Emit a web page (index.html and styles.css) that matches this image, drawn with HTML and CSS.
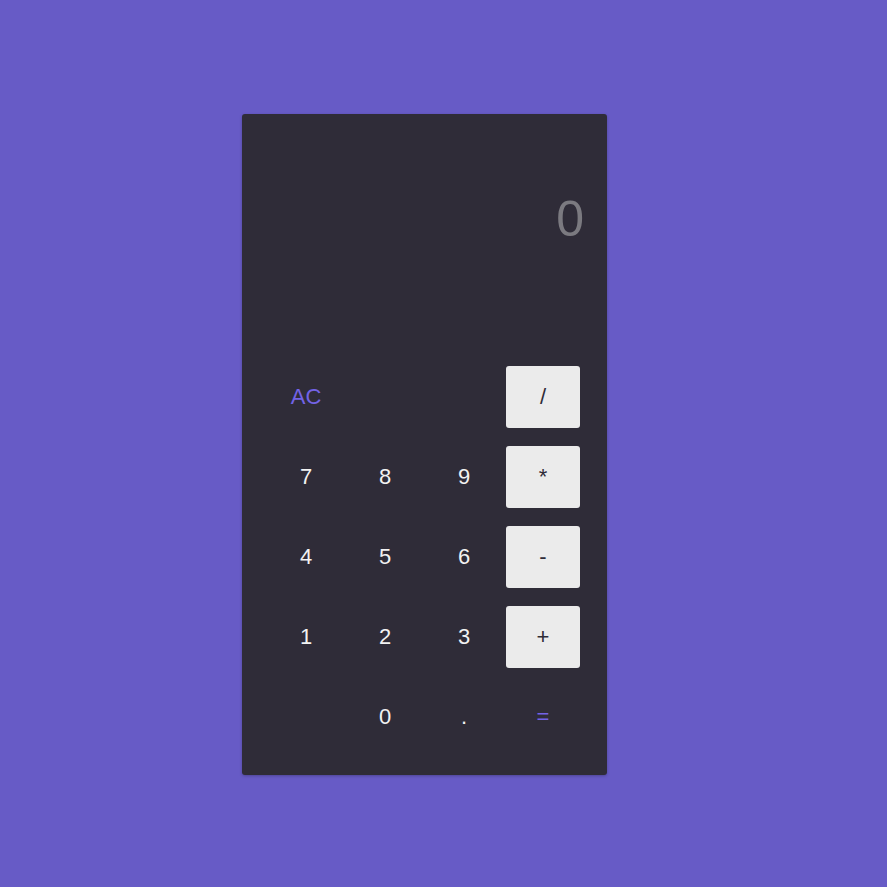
FILE: index.html
```html
<!DOCTYPE html>
<html>
<head>
<meta charset="utf-8">
<link rel="stylesheet" href="styles.css">
</head>
<body>
<div class="calc">
  <div class="display">0</div>
  <div class="keys">
    <button class="key accent">AC</button>
    <span class="key empty"></span>
    <span class="key empty"></span>
    <button class="key op">/</button>
    <button class="key">7</button>
    <button class="key">8</button>
    <button class="key">9</button>
    <button class="key op">*</button>
    <button class="key">4</button>
    <button class="key">5</button>
    <button class="key">6</button>
    <button class="key op">-</button>
    <button class="key">1</button>
    <button class="key">2</button>
    <button class="key">3</button>
    <button class="key op">+</button>
    <span class="key empty"></span>
    <button class="key">0</button>
    <button class="key">.</button>
    <button class="key accent">=</button>
  </div>
</div>
</body>
</html>
```
FILE: styles.css
```css
html, body {
  margin: 0;
  padding: 0;
}
body {
  background: #675bc6;
  height: 887px;
  display: flex;
  align-items: center;
  padding-left: 242px;
  padding-top: 2px;
  box-sizing: border-box;
  font-family: "Liberation Sans", Arial, sans-serif;
}
.calc {
  width: 365px;
  height: 661px;
  background: #2f2c38;
  border-radius: 3px;
  box-shadow: 0 1px 3px rgba(0,0,0,0.25);
  display: flex;
  flex-direction: column;
  box-sizing: border-box;
  padding: 0 27px 27px;
}
.display {
  height: 252px;
  box-sizing: border-box;
  padding-top: 80px;
  text-align: right;
  font-size: 50px;
  line-height: 50px;
  color: #7b7a80;
  margin-right: -4px;
}
.keys {
  display: grid;
  grid-template-columns: repeat(4, 74px);
  grid-auto-rows: 62px;
  column-gap: 5px;
  row-gap: 18px;
}
.key {
  border: none;
  background: transparent;
  color: #f2f2f2;
  font-family: "Liberation Sans", Arial, sans-serif;
  font-size: 22px;
  padding: 0;
  display: flex;
  align-items: center;
  justify-content: center;
  border-radius: 3px;
}
.key.op {
  background: #ebebeb;
  color: #2f2c38;
}
.key.accent {
  color: #7363e6;
}
```
